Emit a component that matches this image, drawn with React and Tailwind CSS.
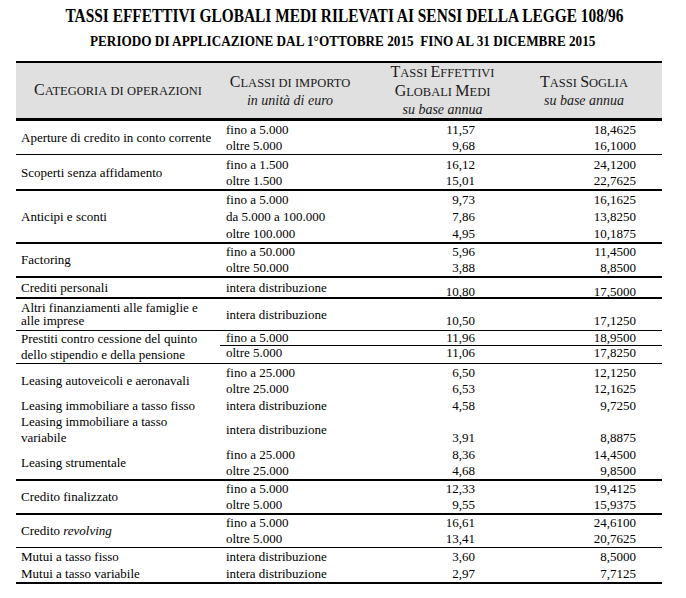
import React from 'react'

const groups = [
  { label: 'Aperture di credito in conto corrente', border: 'border-b border-black', pt: 'pt-px', rows: [
    { c2: 'fino a 5.000', c3: '11,57', c4: '18,4625', h: 'h-4' },
    { c2: 'oltre 5.000', c3: '9,68', c4: '16,1000', h: 'h-4' },
  ] },
  { label: 'Scoperti senza affidamento', border: 'border-b-2 border-black', pt: 'pt-[2px]', rows: [
    { c2: 'fino a 1.500', c3: '16,12', c4: '24,1200', h: 'h-4' },
    { c2: 'oltre 1.500', c3: '15,01', c4: '22,7625', h: 'h-4' },
  ] },
  { label: 'Anticipi e sconti', border: 'border-b-2 border-black', rows: [
    { c2: 'fino a 5.000', c3: '9,73', c4: '16,1625', h: 'h-[17px]' },
    { c2: 'da 5.000 a 100.000', c3: '7,86', c4: '13,8250', h: 'h-[17px]' },
    { c2: 'oltre 100.000', c3: '4,95', c4: '10,1875', h: 'h-[17px]' },
  ] },
  { label: 'Factoring', border: 'border-b-2 border-black', rows: [
    { c2: 'fino a 50.000', c3: '5,96', c4: '11,4500', h: 'h-[15px]' },
    { c2: 'oltre 50.000', c3: '3,88', c4: '8,8500', h: 'h-[17px]' },
  ] },
  { label: 'Crediti personali', border: 'border-b-2 border-black', rows: [
    { c2: 'intera distribuzione', c3: '10,80', c4: '17,5000', h: 'h-[19px]', vp: 'pt-[8px]' },
  ] },
  { label: 'Altri finanziamenti alle famiglie e alle imprese', tight: true, border: 'border-b border-black', rows: [
    { c2: 'intera distribuzione', c3: '10,50', c4: '17,1250', h: 'h-[31px]', vp: 'pt-[13px]' },
  ] },
  { label: 'Prestiti contro cessione del quinto dello stipendio e della pensione', border: 'border-b border-black', rows: [
    { c2: 'fino a 5.000', c3: '11,96', c4: '18,9500', h: 'h-[15px]', line: true },
    { c2: 'oltre 5.000', c3: '11,06', c4: '17,8250', h: 'h-[14px]' },
  ] },
  { label: 'Leasing autoveicoli e aeronavali', rows: [
    { c2: 'fino a 25.000', c3: '6,50', c4: '12,1250', h: 'h-[17px]' },
    { c2: 'oltre 25.000', c3: '6,53', c4: '12,1625', h: 'h-4' },
  ] },
  { label: 'Leasing immobiliare a tasso fisso', rows: [
    { c2: 'intera distribuzione', c3: '4,58', c4: '9,7250', h: 'h-[17px]' },
  ] },
  { label: <>Leasing immobiliare a tasso<br />variabile</>, rows: [
    { c2: 'intera distribuzione', c3: '3,91', c4: '8,8875', h: 'h-8', vp: 'pt-4' },
  ] },
  { label: 'Leasing strumentale', border: 'border-b-2 border-black', rows: [
    { c2: 'fino a 25.000', c3: '8,36', c4: '14,4500', h: 'h-[17px]' },
    { c2: 'oltre 25.000', c3: '4,68', c4: '9,8500', h: 'h-4' },
  ] },
  { label: 'Credito finalizzato', border: 'border-b-2 border-black', rows: [
    { c2: 'fino a 5.000', c3: '12,33', c4: '19,4125', h: 'h-4' },
    { c2: 'oltre 5.000', c3: '9,55', c4: '15,9375', h: 'h-4' },
  ] },
  { label: <>Credito <i>revolving</i></>, border: 'border-b border-black', rows: [
    { c2: 'fino a 5.000', c3: '16,61', c4: '24,6100', h: 'h-4' },
    { c2: 'oltre 5.000', c3: '13,41', c4: '20,7625', h: 'h-4' },
  ] },
  { label: 'Mutui a tasso fisso', rows: [
    { c2: 'intera distribuzione', c3: '3,60', c4: '8,5000', h: 'h-[18px]' },
  ] },
  { label: 'Mutui a tasso variabile', border: 'border-b-2 border-black', rows: [
    { c2: 'intera distribuzione', c3: '2,97', c4: '7,7125', h: 'h-4' },
  ] },
]

// small caps done by hand: first capital at full size, the rest smaller and uppercased
const SC = ({ text }) => (
  <div>
    {text.split(' ').map((w, i) => {
      const big = w[0] === w[0].toUpperCase()
      return (
        <React.Fragment key={i}>
          {i > 0 && ' '}
          {big && <span className="text-[16px]">{w[0]}</span>}
          <span className="text-[12.5px] uppercase">{big ? w.slice(1) : w}</span>
        </React.Fragment>
      )
    })}
  </div>
)

const Group = ({ g }) => (
  <div className={`flex ${g.border || ''} ${g.pt || ''}`}>
    <div className={`w-[204px] flex items-center pl-[5px] pr-1 ${g.tight ? 'leading-[12.5px]' : 'leading-4'}`}>
      <span>{g.label}</span>
    </div>
    <div className="flex flex-col w-[442px]">
      {g.rows.map((r, i) => (
        <div key={i} className={`flex items-center ${r.h} ${r.line ? 'border-b border-black' : ''}`}>
          <div className="w-[140px] pl-[6px] leading-4 whitespace-nowrap">{r.c2}</div>
          <div className={`w-[115px] text-right leading-4 ${r.vp || ''}`}>{r.c3}</div>
          <div className={`w-[161px] text-right leading-4 ${r.vp || ''}`}>{r.c4}</div>
          <div className="w-[26px]" />
        </div>
      ))}
    </div>
  </div>
)

export default function App() {
  return (
    <div className="w-[686px] h-[598px] bg-white text-black font-['Liberation_Serif','Times_New_Roman',serif] pt-[6px]">
      <div className="text-center leading-[20px] text-[19px] font-bold">
        <span className="inline-block scale-x-[0.81] whitespace-nowrap">TASSI EFFETTIVI GLOBALI MEDI RILEVATI AI SENSI DELLA LEGGE 108/96</span>
      </div>
      <div className="text-center leading-4 text-[14.5px] font-bold mt-[7px]">
        <span className="inline-block scale-x-[0.91] whitespace-pre">PERIODO DI APPLICAZIONE DAL 1°OTTOBRE 2015  FINO AL 31 DICEMBRE 2015</span>
      </div>

      <div className="mt-[12px] ml-[16px] w-[646px] text-[13px]">
        <div className="flex items-center h-[60px] bg-[#e0e0e0] border-t-2 border-b-[3px] border-black text-[#1a1a1a] leading-[17px] text-center">
          <div className="w-[204px]"><SC text="Categoria di operazioni" /></div>
          <div className="w-[140px]">
            <SC text="Classi di importo" />
            <div className="italic text-[14px]">in unità di euro</div>
          </div>
          <div className="w-[165px]">
            <SC text="Tassi Effettivi" />
            <SC text="Globali Medi" />
            <div className="italic text-[14px]">su base annua</div>
          </div>
          <div className="w-[118px]">
            <SC text="Tassi Soglia" />
            <div className="italic text-[14px]">su base annua</div>
          </div>
        </div>
        {groups.map((g, i) => <Group key={i} g={g} />)}
      </div>
    </div>
  )
}
